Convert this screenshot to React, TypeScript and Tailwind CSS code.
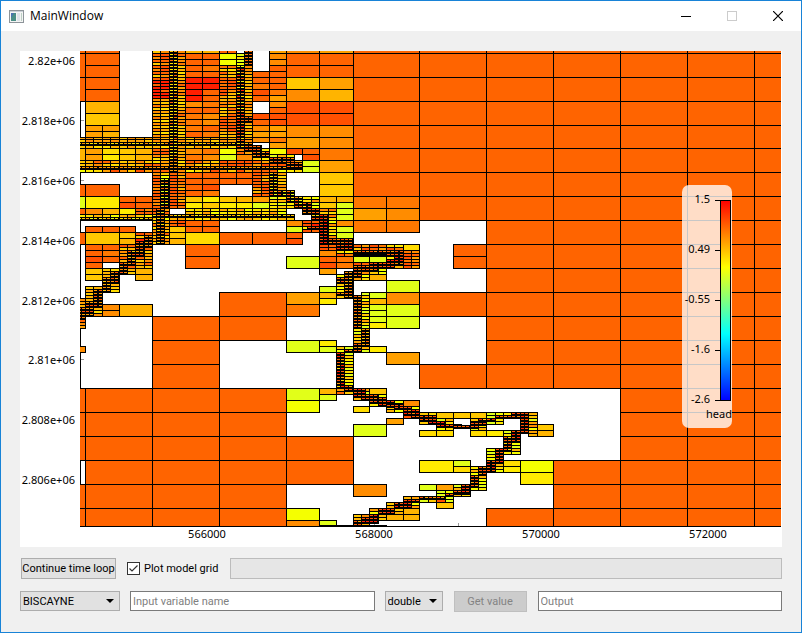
import React from 'react';

const COLORS: Record<string, string> = {
  r: '#ff1e00', R: '#ff5000', o: '#ff6400', p: '#ff7800', q: '#ff8c00', a: '#ffa000',
  b: '#ffb400', c: '#ffc800', d: '#ffdc00', y: '#ffeb00', Y: '#f5ff00', g: '#e1ff19',
};

// One model cell is 8 x 8 grid units; refined cells are fractions of it.
const px = (a: number) => Math.floor(85.57 + 8.36 * a);
const py = (b: number) => Math.floor(53.2 + 2.993 * b);

// Each row: column, row, count across, count down, cell width, cell height, colours
const CELLS = `
32 -8 7 7 8 8 o
40 48 6 1 8 8 o
48 56 5 7 8 8 o
44 64 1 2 4 4 o
40 80 1 1 8 8 o
40 104 1 1 8 8 o
64 112 3 6 8 8 o
56 136 1 3 8 8 o
48 152 5 1 8 8 o
-8 -8 1 3 8 8 o
0 -4 1 5 4 4 o
0 16 1 2 4 4 bc
0 24 2 2 2 2 aaab
-1 28 21 2 1 1 aqbaacqa
-1 31 21 1 1 1 cbddbcac
-1 32 1 1 1 4 b
0 32 4 2 2 2 adcbaycb
-1 36 27 2 1 1 cbooacbqcda
-1 39 27 1 1 1 YydaRqcRaooo
-8 44 1 1 8 4 o
0 44 1 1 4 4 o
-1 48 1 1 1 4 g
-1 52 1 1 1 2 o
0 48 1 1 4 4 y
4 48 2 2 2 2 ooRo
0 52 3 1 2 2 qby
6 52 2 2 1 1 oqoo
-1 54 26 2 1 1 ydbcYbac
0 58 3 1 2 2 o
-8 60 1 1 8 4 o
0 60 1 1 4 4 c
4 60 1 2 2 2 cb
6 60 2 8 1 1 RocqrRab
0 64 1 4 2 2 ooRo
2 64 1 3 2 2 opo
4 64 2 10 1 1 Rocbqca
6 64 2 8 1 1 cqaob
6 72 1 2 2 2 bb
0 72 1 2 2 2 cc
2 72 2 8 1 1 cdbabqc
0 78 2 10 1 1 cbadcqb
2 84 1 2 2 2 qq
4 84 1 1 4 4 b
-1 82 1 10 1 1 qabo
-1 98 1 1 1 2 q
8 56 2 8 1 1 caobdaq
10 60 1 2 2 2 cb
12 60 1 1 4 4 d
12 64 1 2 4 4 o
8 88 1 3 8 8 o
16 80 1 2 8 8 o
-8 112 1 3 8 8 o
-8 144 1 2 8 8 o
0 112 3 6 8 8 o
24 128 1 2 8 8 o
8 -1 2 10 1 1 cqoRqRoo
8 9 2 6 1 1 rrorr
8 15 2 13 1 1 qabcpacd
11 -1 1 41 1 1 qoaqpcbdcb
12 -2 2 1 2 2 bb
12 0 2 4 2 2 ooooopo
12 8 2 4 2 2 rrrrroro
12 16 2 6 2 2 qpoopqp
16 -1 2 1 1 1 o
16 0 1 2 2 2 YY
16 4 2 24 1 1 ppcdobacoooRpRooRqRbacbaq
18 0 1 4 1 1 gdgY
19 4 1 24 1 1 qqabacbacqdb
20 6 1 5 2 2 oopRo
20 20 1 5 2 2 Roqaq
22 -2 1 17 2 2 aqqoooopaqoRRqapa
24 -4 2 5 4 4 qaoooocaqb
24 16 2 4 4 4 RRRRqqaq
22 24 1 4 2 2 aapa
8 32 2 4 1 1 oooRqadc
10 32 2 4 1 1 qacb
12 32 2 2 2 2 qppq
12 40 2 4 2 2 oooooRop
8 40 2 14 1 1 qcoYRaoopd
10 40 2 12 1 1 oqRbRoop
12 48 2 2 2 2 cyyc
12 52 12 2 1 1 ydcybdaY
12 56 2 2 2 2 oooo
10 56 2 2 1 1 oR
10 58 1 1 2 2 c
16 32 1 2 2 2 Yg
18 32 2 2 1 1 qYoa
18 34 1 1 2 2 q
20 32 2 4 1 1 cydgba
22 32 1 1 2 2 Y
22 34 3 2 1 1 gbyaq
16 36 9 2 1 1 RoRRoaRo
24 32 2 1 2 2 Ro
26 34 1 1 2 2 R
26 36 1 4 1 1 ygby
26 36 1 2 2 2 gg
28 32 1 1 4 4 p
28 36 1 3 4 4 acc
16 40 2 2 2 2 oooo
20 40 2 8 1 1 RooaRbo
23 40 1 8 1 1 adbcq
16 48 3 2 2 2 cbayyg
22 48 2 4 1 1 gycby
24 48 4 4 1 1 dqyYbg
28 48 2 1 2 2 bb
28 50 2 1 2 2 cg
30 52 1 2 2 2 gg
28 52 2 4 1 1 qpcd
32 48 2 3 4 4 ppaqpp
24 56 1 2 2 2 qg
26 56 2 4 1 1 RoRryR
29 56 1 8 1 1 Yqyc
30 56 1 3 2 2 qgg
16 60 2 1 4 4 oo
24 60 1 2 2 2 oR
28 62 4 4 1 1 RroYycR
28 64 2 2 1 1 Ro
28 66 2 3 2 2 qoopRo
28 72 1 1 2 2 a
24 68 1 1 4 4 g
30 64 8 4 1 1 cRoaRpdyoq
32 68 2 1 2 2 gg
30 68 1 2 2 2 pp
36 68 2 4 1 1 ygob
38 64 1 1 2 2 d
38 66 2 6 1 1 pqRoRa
32 70 4 2 1 1 RoqR
32 72 4 2 1 1 yqcY
32 74 2 2 1 1 dYa
34 74 1 1 2 2 b
30 74 1 8 1 1 YyYc
28 78 1 3 2 2 gby
24 80 1 2 4 4 ap
36 76 1 4 4 4 gqgg
34 80 1 6 2 2 gbgggy
33 80 1 12 1 1 gcYadg
32 92 1 4 1 1 ygbd
32 96 2 4 1 1 agb
34 98 1 1 2 2 y
30 98 2 2 1 1 cgYa
31 100 1 12 1 1 gcyYbgd
24 96 1 1 4 4 g
28 96 1 2 2 2 yg
36 100 1 1 4 4 a
24 112 1 2 4 4 gY
28 112 1 2 2 2 bg
30 112 2 2 1 1 ayoc
32 112 2 4 1 1 Rabg
34 112 1 1 2 2 c
34 114 2 4 1 1 gYyb
32 118 1 1 2 2 d
36 116 2 4 1 1 bYdgcq
38 116 1 1 2 2 q
38 118 2 4 1 1 gYRg
36 122 1 1 2 2 a
32 124 1 1 4 4 g
40 120 2 4 1 1 cdabgY
42 120 3 1 2 2 ccc
42 122 2 4 1 1 gbYd
46 122 2 4 1 1 cygb
48 120 4 2 1 1 gYyg
48 122 2 2 1 1 gy
40 126 2 1 2 2 dd
46 126 2 1 2 2 dy
53 120 1 8 1 1 bcgaqYa
54 124 1 2 2 2 cb
50 126 2 8 1 1 gbyYcg
48 132 2 8 1 1 YdgYyb
46 138 2 8 1 1 yYbgY
40 136 1 1 4 4 y
44 136 1 2 2 2 gd
50 136 1 2 2 2 dy
52 136 1 2 4 4 Yy
40 144 2 1 2 2 ga
44 144 2 4 1 1 gYbd
42 146 2 4 1 1 gYgyb
40 148 3 2 1 1 cRyg
42 150 1 1 2 2 c
38 148 2 4 1 1 bacgdY
36 150 2 4 1 1 cgbyY
34 152 2 4 1 1 acYgdb
32 154 2 4 1 1 cqbyR
36 154 1 1 2 2 b
38 152 1 2 2 2 bb
32 144 1 1 4 4 q
24 152 1 2 4 4 Yq
28 156 1 1 2 2 g
`;

// Finest cells along the canals: column, row, count across, count down, colours
const FINE = `
-1 30 21 1 cyqdc
-1 38 27 1 qRao
-1 55 9 1 ygcda
8 54 17 1 ycdab
10 -1 1 41 cyaoddy
8.5 52 1 12 oaqd
9 42 1 10 gqYo
10 36 1 4 qa
18 4 1 20 yoYrqdR
19 -1 1 5 oqp
18 19 1 9 Roar
19 21 1 2 o
18 28 1 4 Rad
19 31 2 2 oR
20 33 2 2 Raq
22 35 3 2 Rqo
24 36.5 2 2 qRo
22 40 1 7 cYqa
22 46 3 2 oRdg
24 48 2 2 qRdY
25 50 2 2 RoY
26 52 2 2 Rq
27 53 1 3 Rd
28 54 1 10 rrRor
26.5 58 2 1 Rr
28 63 2 1 rR
29 62 3 2 Rqo
30 64 2 2 Rro
32 66 6 1.5 Raqo
36 66 2 2 oRa
37 67 1 3 Rro
36 69 2 2 rq
34 70 3 2 RoR
32 71 3 2 qRo
31 73 2 2 qRa
31 74 1 8 qoacb
30 75 1 2 Raq
30 80 2 1 Roa
32 81 1 11 Raqob
33 92 1 6 aoqcb
32 97 1 3 Rqoa
31 99 2 1 Roa
30 100 1 12 rroRad
31 111 1 2 Roa
32 112 1.5 3 Ror
33 114 2 2 oRq
34 115 2 2 Roq
35 116 2 2 Rro
36 117.5 2 1 Ro
37 118 2 1 Ro
38 119 2 2 Rrq
39 121 3 1 RRo
40 122 2 1 RRo
41 123 2 1 rR
42 124 3 1 Ror
44 124.5 3 1 Roo
46 123.5 2 1 Roo
47 122 2 1 rRd
49 121 3 1 Rqo
51 120 2 1 RoR
52 120 1 7 RrRo
51 126 1 4 Rro
50 128 1 5 RRdo
49 132 1 5 RRro
48 136 1 4 Rro
47 138 1 3 RRa
46 141 1 4 Roa
45 144 1 2 Rro
44 146 2 1.5 Rro
43 147 1 1 Rro
40 148 3 1 RRao
38 149 2 1 RRr
37 150 2 2 Rro
36 152 1 1 Rro
35 152 2 2 RRr
34 154 1 2 RRr
33 155 2 2 Rr
32 156 1 2 Rob
7 61 1 4 qoa
6 63 1 5 Ra
5 66 1 5 Rac
4 70 1 4 Raq
3 73 1 4 qaR
2 75 1 5 qca
1 79 1 6 aqR
0 83 1 5 aR
-1 85 1 4 Raq
`;

const Cells = () => {
  const out: React.ReactNode[] = [];
  CELLS.trim().split('\n').forEach((line, k) => {
    const parts = line.split(' ');
    const [a, b, nx, ny, w, h] = parts.slice(0, 6).map(Number);
    const pal = parts[6];
    for (let r = 0; r < ny; r++)
      for (let c = 0; c < nx; c++) {
        const x = px(a + c * w);
        const y = py(b + r * h);
        out.push(
          <rect
            key={`${k}-${r}-${c}`}
            x={x + 0.5}
            y={y + 0.5}
            width={px(a + (c + 1) * w) - x}
            height={py(b + (r + 1) * h) - y}
            fill={COLORS[pal[(r * nx + c) % pal.length]]}
          />,
        );
      }
  });
  return <g stroke="#000">{out}</g>;
};

const FineCells = () => {
  const out: React.ReactNode[] = [];
  FINE.trim().split('\n').forEach((line, k) => {
    const parts = line.split(' ');
    const [a, b, nx, ny] = parts.slice(0, 4).map(Number);
    const pal = parts[4];
    out.push(
      <rect key={k} x={px(a)} y={py(b)} width={px(a + nx) - px(a) + 1} height={py(b + ny) - py(b) + 1} fill="#000" />,
    );
    for (let r = 0; r < Math.floor(ny); r++)
      for (let c = 0; c < nx * 2; c++)
        out.push(
          <rect
            key={`${k}-${r}-${c}`}
            x={px(a + c / 2) + 1}
            y={py(b + r) + 1}
            width={3}
            height={1}
            fill={COLORS[pal[(r + c * 2) % pal.length]]}
          />,
        );
  });
  return <g>{out}</g>;
};

const yLabels: [string, number][] = [
  ['2.82e+06', 65], ['2.818e+06', 125], ['2.816e+06', 185], ['2.814e+06', 245],
  ['2.812e+06', 305], ['2.81e+06', 364], ['2.808e+06', 424], ['2.806e+06', 484],
];
const xLabels: [string, number][] = [['566000', 207], ['568000', 374], ['570000', 541], ['572000', 708]];
const legend: [string, number][] = [['1.5', 200], ['0.49', 250], ['-0.55', 300], ['-1.6', 350], ['-2.6', 400]];

const Plot = () => (
  <svg viewBox="20 51 762 496" className="block h-auto w-full bg-white font-['Noto_Sans','Open_Sans',sans-serif] text-[11px]" role="img" aria-label="head">
    <defs>
      <clipPath id="area">
        <rect x="80" y="51" width="701" height="476" />
      </clipPath>
      <linearGradient id="ramp" x1="0" y1="0" x2="0" y2="1">
        <stop offset="0" stopColor="#ff0000" />
        <stop offset="0.333" stopColor="#ffff00" />
        <stop offset="0.667" stopColor="#00ffff" />
        <stop offset="1" stopColor="#0000ff" />
      </linearGradient>
    </defs>
    <g clipPath="url(#area)" shapeRendering="crispEdges">
      <path d="M80.5 101V389M80.5 460V485" stroke="#000" />
      <path d="M81 120.5h3M81 180.5h3M81 300.5h3M81 359.5h3M374.5 522v4M458.5 523v3" stroke="#999" />
      <Cells />
      <FineCells />
      <path d="M80 526.5H781" stroke="#000" />
      <path d="M319 525.5H387" stroke="#000" />
    </g>
    <g textAnchor="end">
      {yLabels.map(([t, y]) => <text key={t} x="75" y={y}>{t}</text>)}
    </g>
    <g textAnchor="middle">
      {xLabels.map(([t, x]) => <text key={t} x={x} y="538">{t}</text>)}
    </g>
    <rect x="682" y="185" width="50" height="243" rx="7" fill="#fff" fillOpacity="0.78" />
    <g shapeRendering="crispEdges">
      <rect x="720.5" y="200.5" width="10" height="200" fill="url(#ramp)" stroke="#000" />
      <path d="M715 200.5h5M715 250.5h5M715 300.5h5M715 350.5h5M715 400.5h5" stroke="#000" />
    </g>
    <g textAnchor="end">
      {legend.map(([t, y]) => <text key={t} x="710" y={y + 3}>{t}</text>)}
      <text x="732" y="418">head</text>
    </g>
  </svg>
);

const Drop = ({ label, options, className }: { label: string; options: string[]; className: string }) => (
  <div className={`relative h-5 shrink-0 ${className}`}>
    <select aria-label={label} className="h-full w-full appearance-none border border-[#adadad] bg-[#e1e1e1] pl-0.5 pt-px leading-4">
      {options.map((o) => <option key={o}>{o}</option>)}
    </select>
    <svg viewBox="0 0 8 4" className="pointer-events-none absolute right-1.5 top-2 h-1 w-2">
      <path d="M0 0H8L4 4Z" />
    </svg>
  </div>
);

export default function App() {
  return (
    <div className="flex min-h-screen flex-col border border-[#1883d7] bg-[#f0f0f0] font-[Roboto,'Noto_Sans',sans-serif] text-[11px] text-black">
      <header className="flex h-[30px] items-center bg-white pl-2">
        <svg viewBox="0 0 15 13" className="h-[13px] w-[15px]" aria-hidden="true">
          <rect x=".5" y=".5" width="14" height="12" fill="#f4f4f4" stroke="#8d9499" />
          <rect x="1" y="1" width="13" height="1" fill="#c9d0d6" />
          <rect x="2" y="3" width="5" height="8" fill="#4a8f86" />
          <path d="M2 3h3L2 8Z" fill="#4a72b0" />
          <rect x="8" y="3" width="3" height="8" fill="#dde3e8" />
          <rect x="12" y="3" width="1" height="8" fill="#bcd0c4" />
        </svg>
        <h1 className="ml-1.5 flex-1 font-['Open_Sans','Noto_Sans',sans-serif] text-[12px]">MainWindow</h1>
        <button aria-label="Minimize" className="flex h-full w-[46px] items-center justify-center">
          <svg viewBox="0 0 10 10" className="size-2.5" shapeRendering="crispEdges"><path d="M0 5.5H10" stroke="#000" /></svg>
        </button>
        <button aria-label="Maximize" disabled className="flex h-full w-[46px] items-center justify-center">
          <svg viewBox="0 0 10 10" className="size-2.5" shapeRendering="crispEdges"><rect x=".5" y=".5" width="9" height="9" fill="none" stroke="#ccc" /></svg>
        </button>
        <button aria-label="Close" className="flex h-full w-[46px] items-center justify-center">
          <svg viewBox="0 0 10 10" className="size-2.5"><path d="M0 0L10 10M10 0L0 10" stroke="#000" strokeWidth="1.2" /></svg>
        </button>
      </header>
      <main className="flex flex-1 flex-col px-[19px] pt-5">
        <Plot />
        <div className="mt-[11px] flex h-[21px] items-center">
          <button className="ml-px h-full w-[95px] shrink-0 whitespace-nowrap border border-[#adadad] bg-[#e1e1e1] pt-0.5">Continue time loop</button>
          <label className="ml-[11px] flex w-[103px] shrink-0 items-center gap-1 whitespace-nowrap">
            <span className="grid size-[13px] shrink-0">
              <input type="checkbox" defaultChecked className="peer col-start-1 row-start-1 size-[13px] appearance-none border border-[#333] bg-white" />
              <svg viewBox="0 0 13 13" className="pointer-events-none col-start-1 row-start-1 hidden size-[13px] peer-checked:block">
                <path d="M2.5 6.5L5 9L10.5 3.5" fill="none" stroke="#333" strokeWidth="1.2" />
              </svg>
            </span>
            <span className="pt-0.5">Plot model grid</span>
          </label>
          <div role="progressbar" aria-label="Progress" className="h-full flex-1 border border-[#bcbcbc] bg-[#e6e6e6]" />
        </div>
        <div className="mt-3 flex h-[21px] items-start">
          <Drop label="Model" options={['BISCAYNE']} className="w-[100px]" />
          <input aria-label="Input variable name" placeholder="Input variable name" className="ml-2.5 h-5 min-w-0 flex-1 border border-[#7a7a7a] bg-white px-0.5 pt-px placeholder:text-[#808080]" />
          <Drop label="Type" options={['double']} className="ml-2.5 w-[58px]" />
          <button disabled className="ml-[11px] h-full w-[73px] shrink-0 border border-[#bfbfbf] bg-[#cccccc] pt-0.5 text-[#838383]">Get value</button>
          <input aria-label="Output" placeholder="Output" readOnly className="ml-[11px] h-5 min-w-0 flex-1 border border-[#7a7a7a] bg-white px-0.5 pt-px placeholder:text-[#808080]" />
        </div>
      </main>
    </div>
  );
}
